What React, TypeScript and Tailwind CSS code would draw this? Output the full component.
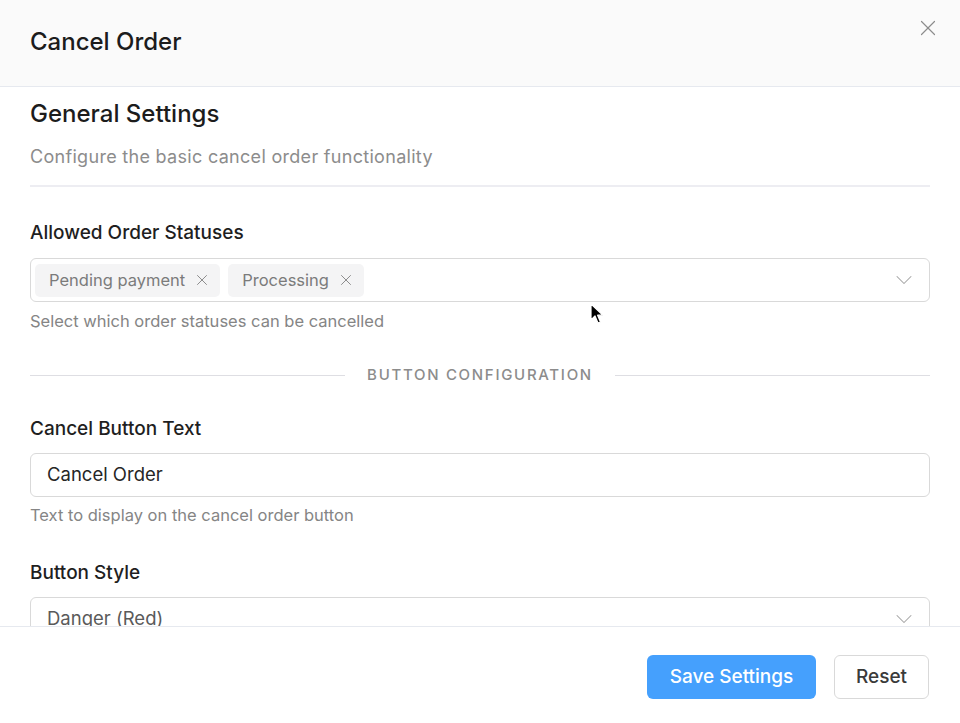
import React from 'react';
import { X, ChevronDown } from 'lucide-react';

const font = { fontFamily: 'Inter, "Noto Sans", sans-serif' };

function Tag({ label }: { label: string }) {
  return (
    <span className="flex items-center gap-[8px] h-[33px] pl-[14px] pr-[9px] rounded-[5px] bg-[#f4f4f5] text-[16.5px] text-[#7b7b7b]">
      {label}
      <X className="h-[18px] w-[18px] text-[#8a8a8a]" strokeWidth={1.3} />
    </span>
  );
}

function Cursor() {
  return (
    <svg className="absolute left-[590px] top-[303px]" width="14" height="22" viewBox="0 0 14 22">
      <path d="M1 1 L1 17 L5 13 L8 20 L10.5 19 L7.6 12.2 L13 12.2 Z" fill="#000" stroke="#fff" strokeWidth="1.2" strokeLinejoin="round" />
    </svg>
  );
}

export default function App() {
  return (
    <div className="relative h-[723px] w-[960px] flex flex-col bg-white overflow-hidden" style={font}>
      {/* Header */}
      <div className="h-[87px] shrink-0 flex items-start justify-between bg-[#fafafa] border-b border-[#e6e9ef] px-[30px]">
        <h1 className="mt-[25px] text-[24px] font-medium text-[#1c1c1c] leading-[34px]">Cancel Order</h1>
        <X className="mt-[15px] -mr-[11px] h-[26px] w-[26px] text-[#8c8c8c]" strokeWidth={1.1} />
      </div>

      {/* Body */}
      <div className="flex-1 overflow-hidden px-[30px] pt-[11px]">
        <h2 className="text-[24px] font-medium text-[#1c1c1c] leading-[32px]">General Settings</h2>
        <p className="mt-[15px] text-[18px] tracking-[0.3px] text-[#8c8c8c] leading-[24px]">Configure the basic cancel order functionality</p>
        <div className="mt-[16px] h-[2px] bg-[#ededf2]" />

        <div className="mt-[33px]">
          <label className="block text-[19px] font-medium text-[#1f1f1f] leading-[26px]">Allowed Order Statuses</label>
          <div className="mt-[12px] h-[44px] flex items-center justify-between border border-[#d9d9d9] rounded-[6px] pl-[4px] pr-[11px]">
            <div className="flex items-center gap-[8px]">
              <Tag label="Pending payment" />
              <Tag label="Processing" />
            </div>
            <ChevronDown className="h-[28px] w-[28px] text-[#a3a3a3]" strokeWidth={0.9} />
          </div>
          <p className="mt-[8px] text-[16.5px] text-[#858585] leading-[22px]">Select which order statuses can be cancelled</p>
        </div>

        <div className="mt-[32px] flex items-center gap-[22px]">
          <div className="flex-1 h-px bg-[#dedee3]" />
          <span className="text-[15px] font-medium tracking-[1.7px] text-[#8c8c8c]">BUTTON CONFIGURATION</span>
          <div className="flex-1 h-px bg-[#dedee3]" />
        </div>

        <div className="mt-[29px]">
          <label className="block text-[19px] font-medium text-[#1f1f1f] leading-[26px]">Cancel Button Text</label>
          <div className="mt-[11px] h-[44px] flex items-center border border-[#d9d9d9] rounded-[6px] px-[16px] text-[18.5px] text-[#262626]">
            Cancel Order
          </div>
          <p className="mt-[7px] text-[16.5px] text-[#858585] leading-[22px]">Text to display on the cancel order button</p>
        </div>

        <div className="mt-[34px]">
          <label className="block text-[19px] font-medium text-[#1f1f1f] leading-[26px]">Button Style</label>
          <div className="mt-[11px] h-[44px] flex items-center justify-between border border-[#d9d9d9] rounded-[6px] pl-[16px] pr-[11px] text-[18.5px] text-[#5a5a5a]">
            Danger (Red)
            <ChevronDown className="h-[28px] w-[28px] text-[#a3a3a3]" strokeWidth={0.9} />
          </div>
        </div>
      </div>

      {/* Footer */}
      <div className="h-[97px] shrink-0 flex items-start justify-end gap-[18px] border-t border-[#e6e9ef] bg-white px-[31px] pt-[28px]">
        <button className="h-[44px] w-[169px] rounded-[6px] bg-[#45a0fd] text-[19px] font-medium text-white">Save Settings</button>
        <button className="h-[44px] w-[95px] rounded-[6px] border border-[#d9d9d9] bg-white text-[19px] font-medium text-[#3a3a3a]">Reset</button>
      </div>

      <Cursor />
    </div>
  );
}
